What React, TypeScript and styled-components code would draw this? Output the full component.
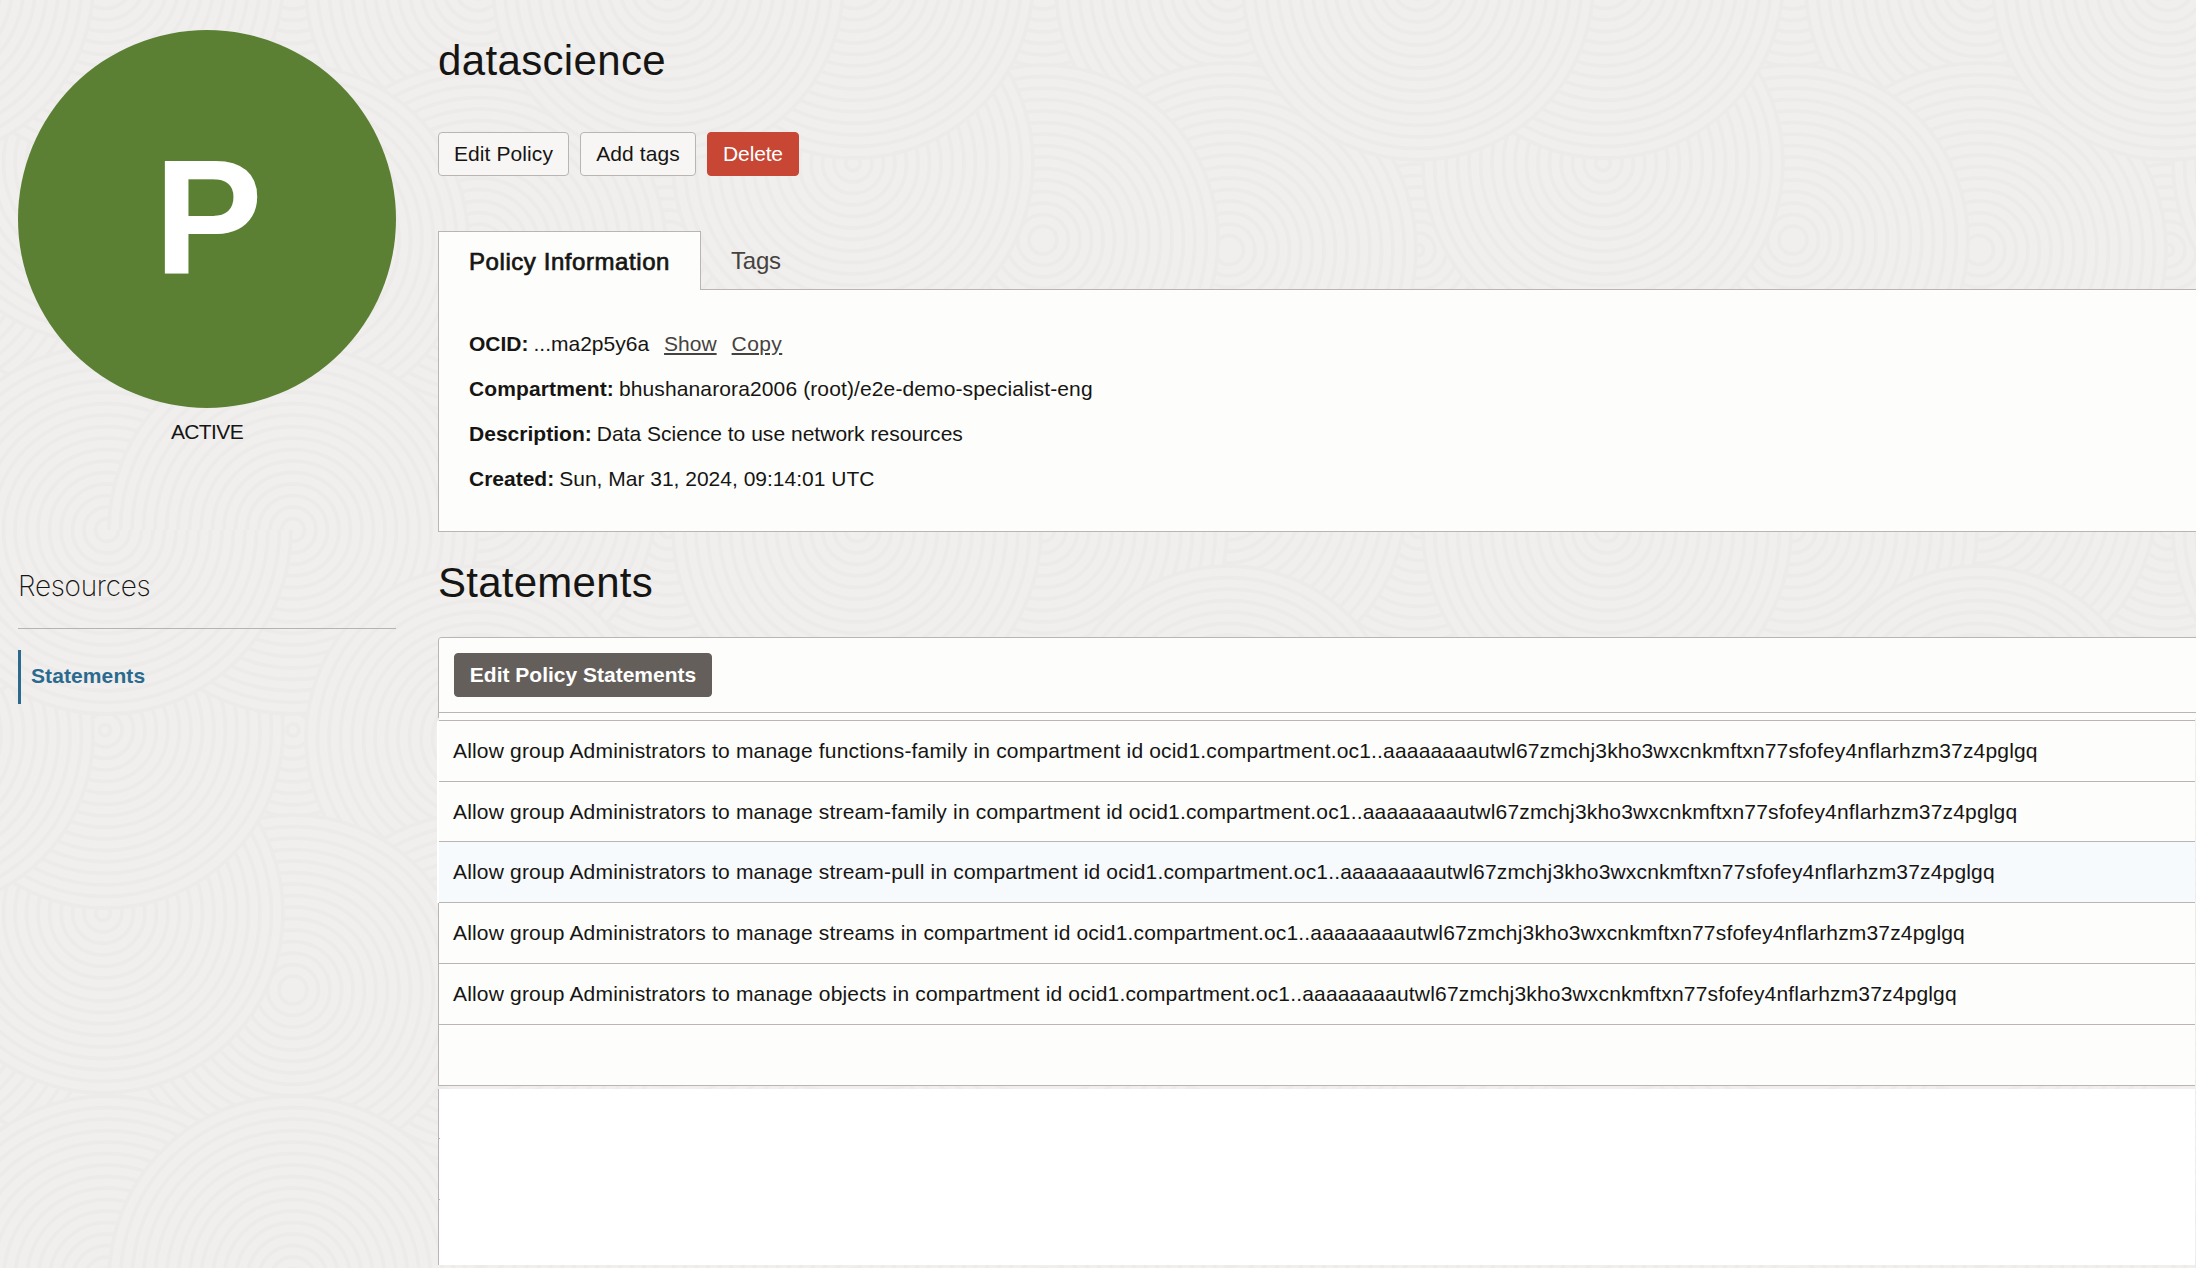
import React from "react";
import styled, { createGlobalStyle, css } from "styled-components";

const color = {
  page: "#f0efed",
  ring: "#ecebe9",
  panel: "#fdfdfb",
  line: "#bab5b2",
  text: "#161513",
  muted: "#45423f",
  green: "#5b8034",
  red: "#c74634",
  brown: "#655f5b",
  blue: "#2a6a8e",
  hover: "#f6fafd",
};

const GlobalStyle = createGlobalStyle`
  *, *::before, *::after { box-sizing: border-box; }
  html, body { margin: 0; padding: 0; background: ${color.page}; }
  body {
    color: ${color.text};
    font-family: "Liberation Sans", Arial, sans-serif;
    font-size: 21px;
    letter-spacing: 0.1px;
    overflow: hidden;
  }
`;

const Page = styled.div`
  position: relative;
  width: 2196px;
  height: 1268px;
  overflow: hidden;
`;

const Backdrop = styled.svg`
  position: absolute;
  inset: 0;
  width: 100%;
  height: 100%;
`;

const Layout = styled.div`
  position: relative;
  display: grid;
  grid-template-columns: 378px 1fr;
  column-gap: 41px;
  height: 100%;
  padding-left: 18px;
`;

const Sidebar = styled.aside`
  display: flex;
  flex-direction: column;
  padding-top: 30px;
`;

const StatusBadge = styled.div`
  display: flex;
  align-items: center;
  justify-content: center;
  height: 378px;
  padding: 0 0 4px 3px;
  border-radius: 50%;
  background: ${color.green};
  color: #fff;
  font-size: 163px;
  font-weight: 700;
  line-height: 1;
`;

const StatusLabel = styled.div`
  margin-top: 11px;
  line-height: 26px;
  text-align: center;
  letter-spacing: -0.6px;
`;

const ResourcesTitle = styled.h2`
  margin: 122px 0 0;
  height: 62px;
  padding-top: 2px;
  border-bottom: 1px solid #b6b4b2;
  font-family: Inter, "Liberation Sans", sans-serif;
  font-size: 28px;
  font-weight: 200;
  letter-spacing: -0.28px;
  line-height: 34px;
`;

const ResourceLink = styled.a`
  display: flex;
  align-items: center;
  height: 54px;
  margin-top: 21px;
  padding: 0 0 2px 10px;
  border-left: 3px solid ${color.blue};
  color: ${color.blue};
  font-weight: 700;
`;

const Main = styled.main`
  display: flex;
  flex-direction: column;
  min-width: 0;
  padding: 37px 0 3px 1px;
`;

const Heading = styled.h1<{ $gap?: number; $spacing?: number }>`
  margin: ${(p) => p.$gap ?? 0}px 0 0;
  height: 48px;
  font-size: 42px;
  font-weight: 400;
  letter-spacing: ${(p) => p.$spacing ?? 0.35}px;
  line-height: 48px;
`;

const Actions = styled.div`
  display: flex;
  gap: 11px;
  margin-top: 47px;
`;

const Button = styled.button<{ $kind?: "danger" | "primary"; $width: number }>`
  width: ${(p) => p.$width}px;
  height: 44px;
  padding: 0;
  border: 1px solid ${color.line};
  border-radius: 4px;
  background: #f7f6f4;
  color: ${color.text};
  font: inherit;
  letter-spacing: 0.1px;
  ${(p) =>
    p.$kind === "danger" &&
    css`
      border-color: ${color.red};
      background: ${color.red};
      color: #fff;
      letter-spacing: -0.15px;
    `}
  ${(p) =>
    p.$kind === "primary" &&
    css`
      border-color: ${color.brown};
      background: ${color.brown};
      color: #fff;
      font-weight: 700;
      letter-spacing: 0;
    `}
`;

const Tabs = styled.div`
  display: flex;
  height: 59px;
  margin-top: 55px;
`;

const Tab = styled.div<{ $active?: boolean }>`
  display: flex;
  align-items: center;
  padding: 2px 0 0 30px;
  color: ${color.muted};
  font-size: 24px;
  letter-spacing: -0.2px;
  ${(p) =>
    p.$active &&
    css`
      width: 263px;
      border: 1px solid ${color.line};
      border-bottom: 0;
      background: ${color.panel};
      color: ${color.text};
      letter-spacing: 0.57px;
      -webkit-text-stroke: 0.7px ${color.text};
    `}
`;

const InactiveTabs = styled.div`
  display: flex;
  flex: 1;
  border-bottom: 1px solid ${color.line};
`;

const InfoPanel = styled.section`
  height: 242px;
  padding: 31px 0 0 30px;
  border: 1px solid ${color.line};
  border-top: 0;
  border-right: 0;
  background: ${color.panel};
`;

const InfoRow = styled.div<{ $spacing?: number }>`
  display: flex;
  align-items: center;
  height: 45px;
  letter-spacing: ${(p) => p.$spacing ?? 0}px;
  white-space: pre;
`;

const Label = styled.strong`
  margin-right: 5px;
  font-weight: 700;
`;

const TextLink = styled.a<{ $spacing: number }>`
  margin-left: 15px;
  color: ${color.muted};
  letter-spacing: ${(p) => p.$spacing}px;
  text-decoration: underline;
  text-decoration-thickness: 2px;
  text-underline-offset: 2px;
`;

const StatementsPanel = styled.section`
  display: flex;
  flex-direction: column;
  flex: 1;
  margin-top: 30px;
  border-top: 1px solid ${color.line};
  border-top-left-radius: 4px;
`;

const Toolbar = styled.div`
  height: 80px;
  padding: 15px 0 0 15px;
  border-left: 1px solid ${color.line};
  border-top-left-radius: 3px;
  background: ${color.panel};
`;

const ToolbarRule = styled.div`
  height: 6px;
  margin: 15px 0 0 -15px;
  border-top: 1px solid ${color.line};
`;

const List = styled.ul`
  margin: 0 1px 0 -1px;
  padding: 0;
  list-style: none;
`;

const ListTop = styled.li`
  height: 3px;
  margin-left: 2px;
  border-bottom: 1px solid ${color.line};
  background: ${color.panel};
`;

const Row = styled.li<{ $edge?: boolean; $short?: boolean }>`
  display: flex;
  height: ${(p) => (p.$short ? 60 : 61)}px;
  padding-left: 1px;
  background: ${(p) =>
    p.$edge
      ? `linear-gradient(${color.line}, ${color.line}) 1px 0 / 1px 100% no-repeat`
      : `linear-gradient(#fff, #fff) 0 0 / 2px 100% no-repeat`};
`;

const RowBody = styled.div<{ $highlight?: boolean }>`
  display: flex;
  align-items: center;
  flex: 1;
  margin-left: 1px;
  padding-left: 14px;
  border-bottom: 1px solid ${color.line};
  background: ${(p) => (p.$highlight ? color.hover : color.panel)};
  letter-spacing: 0.17px;
  white-space: nowrap;
`;

const EmptyArea = styled.div`
  flex: 1;
  margin: 3px 1px 0 0;
  border-left: 1px solid ${color.line};
  background:
    linear-gradient(${color.line}, ${color.line}) 0 49px / 1px 1px no-repeat,
    linear-gradient(${color.line}, ${color.line}) 0 110px / 1px 1px no-repeat,
    #fff;
`;

type DiscProps = { x: number; y: number; r: number; clip?: string };

const Disc = ({ x, y, r, clip }: DiscProps) => {
  const radii: number[] = [];
  for (let n = r; n > 4; n -= 11.5) radii.push(n);
  return (
    <g clipPath={clip}>
      <circle cx={x} cy={y} r={r} fill={color.page} />
      {radii.map((n) => (
        <circle key={n} cx={x} cy={y} r={n} fill="none" stroke={color.ring} strokeWidth={3.5} />
      ))}
    </g>
  );
};

const discs: DiscProps[] = [
  { x: 293, y: 730, r: 190 },
  { x: 293, y: -20, r: 190 },
  { x: 105, y: 730, r: 178 },
  { x: 855, y: 730, r: 178 },
  { x: 668, y: 735, r: 175 },
  { x: -82, y: 735, r: 175 },
  { x: 668, y: 250, r: 178 },
  { x: -82, y: 250, r: 178 },
  { x: 668, y: 530, r: 180 },
  { x: -82, y: 530, r: 180 },
  { x: 478, y: 500, r: 178 },
  { x: 478, y: -12, r: 172 },
  { x: 479, y: 250, r: 187 },
  { x: 293, y: 240, r: 175 },
  { x: 103, y: 163, r: 180 },
  { x: 853, y: 163, r: 180 },
  { x: 107, y: 530, r: 184 },
  { x: 857, y: 530, r: 184 },
  { x: 293, y: 530, r: 184 },
  { x: 107, y: 530, r: 184, clip: "url(#lower)" },
  { x: 478, y: 738, r: 172 },
  { x: 105, y: -20, r: 178 },
  { x: -82, y: -15, r: 175 },
  { x: 668, y: -15, r: 175 },
];

const SandPattern = () => (
  <Backdrop aria-hidden="true">
    <defs>
      <clipPath id="lower">
        <rect x="-100" y="530" width="420" height="220" />
      </clipPath>
      <pattern id="sand" width="750" height="750" patternUnits="userSpaceOnUse">
        <rect width="750" height="750" fill={color.page} />
        {discs.map((d, i) => (
          <Disc key={i} {...d} />
        ))}
      </pattern>
    </defs>
    <rect width="100%" height="100%" fill="url(#sand)" />
  </Backdrop>
);

const TARGET =
  "in compartment id ocid1.compartment.oc1..aaaaaaaautwl67zmchj3kho3wxcnkmftxn77sfofey4nflarhzm37z4pglgq";
const resources = ["functions-family", "stream-family", "stream-pull", "streams", "objects"];

export default function App() {
  return (
    <Page>
      <GlobalStyle />
      <SandPattern />
      <Layout>
        <Sidebar>
          <StatusBadge>P</StatusBadge>
          <StatusLabel>ACTIVE</StatusLabel>
          <ResourcesTitle>Resources</ResourcesTitle>
          <ResourceLink>Statements</ResourceLink>
        </Sidebar>
        <Main>
          <Heading>datascience</Heading>
          <Actions>
            <Button $width={131}>Edit Policy</Button>
            <Button $width={116}>Add tags</Button>
            <Button $width={92} $kind="danger">Delete</Button>
          </Actions>
          <Tabs>
            <Tab $active>Policy Information</Tab>
            <InactiveTabs>
              <Tab>Tags</Tab>
            </InactiveTabs>
          </Tabs>
          <InfoPanel>
            <InfoRow>
              <Label>OCID:</Label>...ma2p5y6a
              <TextLink $spacing={0}>Show</TextLink>
              <TextLink $spacing={0.4}>Copy</TextLink>
            </InfoRow>
            <InfoRow $spacing={0.12}>
              <Label>Compartment:</Label>bhushanarora2006 (root)/e2e-demo-specialist-eng
            </InfoRow>
            <InfoRow $spacing={0.02}>
              <Label>Description:</Label>Data Science to use network resources
            </InfoRow>
            <InfoRow>
              <Label>Created:</Label>Sun, Mar 31, 2024, 09:14:01 UTC
            </InfoRow>
          </InfoPanel>
          <Heading $gap={27} $spacing={0.25}>Statements</Heading>
          <StatementsPanel>
            <Toolbar>
              <Button $width={258} $kind="primary">Edit Policy Statements</Button>
              <ToolbarRule />
            </Toolbar>
            <List>
              <ListTop />
              {resources.map((name, i) => (
                <Row key={name} $short={i === 1} $edge={i > 2}>
                  <RowBody $highlight={i === 2}>
                    Allow group Administrators to manage {name} {TARGET}
                  </RowBody>
                </Row>
              ))}
              <Row $edge>
                <RowBody />
              </Row>
            </List>
            <EmptyArea />
          </StatementsPanel>
        </Main>
      </Layout>
    </Page>
  );
}
